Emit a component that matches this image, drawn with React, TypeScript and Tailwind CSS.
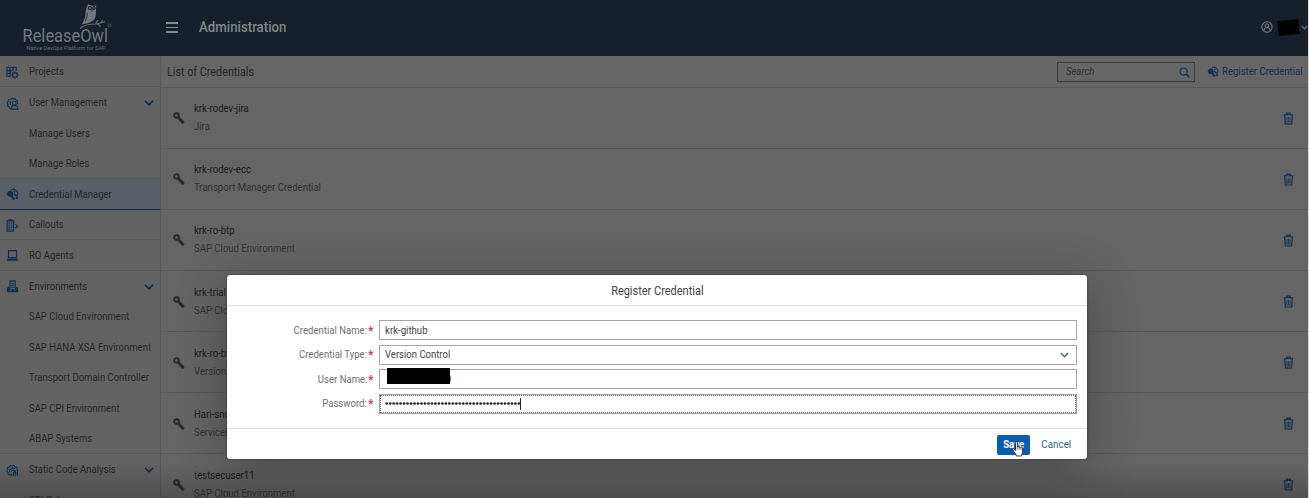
import React from "react";

type IconProps = { className?: string };

function ProjectsIcon() {
  return (
    <svg viewBox="0 0 14 14" className="h-[13px] w-[13px]" fill="none" stroke="currentColor" strokeWidth="1">
      <path d="M1 1.5h10v4M1 1.5v9.5h4.5M1 5h7M1 8h4.5M4.3 1.5V11M7.7 1.5V5" strokeWidth="1.2" />
      <circle cx="9.6" cy="9.6" r="2.5" strokeWidth="1.3" />
      <path d="M9.6 5.6v1.5M9.6 12.1v1.7M5.6 9.6h1.5M12.1 9.6h1.7M6.8 6.8l1 1M11.4 11.4l1 1M12.4 6.8l-1 1M7.8 11.4l-1 1" />
    </svg>
  );
}

function UserManagementIcon() {
  return (
    <svg viewBox="0 0 14 14" className="h-[13px] w-[13px]" fill="none" stroke="currentColor" strokeWidth="1.2">
      <path d="M5 12.7 3.6 12 3.3 10.4 1.6 9.3 2 7.5 1.2 5.8 2.6 4.4 3 2.7l1.9-.3L6.3 1.2l1.6.8 1.8-.3 1 1.5 1.5.9v1.8l.8 1.3" />
      <path d="M5.2 8.5A3 3 0 0 1 5.5 4.4" />
      <circle cx="9" cy="6.7" r="2.1" />
      <path d="M5.5 13c0-2.6 1.5-3.9 3.5-3.9s3.8 1.3 3.8 3.9z" />
    </svg>
  );
}

function CredentialIcon({ className = "h-[13px] w-[13px]" }: IconProps) {
  return (
    <svg viewBox="0 0 14 14" className={className} fill="none" stroke="currentColor">
      <path d="M4.8 2.6 7.4 4.6 7.8 6.8 6.6 8 5.2 9.4 2.8 9.2.7 6.6 2 3.8z" fill="currentColor" stroke="none" />
      <path d="M4.6 8.4 7.6 12.6 9.4 12.8 9.6 11.2 6.8 6.8z" fill="currentColor" stroke="none" />
      <path d="M5.8 2.4 8.2 1l3.4 2 1.2 3.2-1.6 2.2" strokeWidth="1.2" />
      <path d="M8.4 6 12.2 9.6 12 11.2 10.6 11" strokeWidth="1.5" />
      <circle cx="9" cy="3.8" r="1" fill="currentColor" stroke="none" />
    </svg>
  );
}

function CalloutsIcon() {
  return (
    <svg viewBox="0 0 14 14" className="h-[13px] w-[13px]" fill="none" stroke="currentColor">
      <path d="M1.2 2h7v11h-7zM3 2V.8h3.4V2" strokeWidth="1.3" />
      <path d="M2.6 4.5h4.3M2.6 6.7h4.3M2.6 8.9h4.3M2.6 11h4.3" strokeWidth="1.4" strokeDasharray="1.7 .9" />
      <path d="M10.2 5.5 12.5 7.7 10.2 10" strokeWidth="1.3" />
    </svg>
  );
}

function LaptopIcon() {
  return (
    <svg viewBox="0 0 14 14" className="h-[13px] w-[13px]" fill="none" stroke="currentColor">
      <path d="M2.7 1.8h8.6v7.4H2.7z" strokeWidth="1.3" />
      <path d="M2 10.2h10l1.3 2.5H.7z" fill="currentColor" stroke="none" />
    </svg>
  );
}

function EnvironmentsIcon() {
  return (
    <svg viewBox="0 0 14 14" className="h-[13px] w-[13px]" fill="none" stroke="currentColor">
      <path d="M4.3 12V1h5.6v11" strokeWidth="1.3" />
      <path d="M5.7 3.5h3M5.7 5.7h3M5.7 7.9h3" strokeWidth="1.1" />
      <path d="M3.6 7 1 8.3v4.9h12V8.3l-2.4-.8v4H8.4V9.8H6v1.7H3.6z" fill="currentColor" stroke="none" />
    </svg>
  );
}

function AnalysisIcon() {
  return (
    <svg viewBox="0 0 14 14" className="h-[13px] w-[13px]" fill="none" stroke="currentColor" strokeWidth="1.1">
      <path d="M5 12.8 4.2 11.2 2.2 11 2.3 9 .9 7.5 2 5.9 1.7 3.9 3.7 3.3 4.7 1.5l1.9.6 1.9-.7 1.1 1.6 2 .5v2l1.3 1.5-.8 1" />
      <path d="M3.9 9.2A3.8 3.8 0 0 1 9.8 5M5.7 8.4a1.8 1.8 0 0 1 3.2-1.2c.7 1-.2 1.7-1 2.2v3.8" />
      <path d="M10 6.5v6.3M12.3 8v5M5.8 10.3v2.5M10 10h2.3" />
    </svg>
  );
}

function KeyIcon() {
  return (
    <svg viewBox="0 0 12 12" className="h-3 w-3 shrink-0" fill="none" stroke="currentColor">
      <circle cx="3.5" cy="3.5" r="2.3" strokeWidth="2.1" />
      <path d="M5 5.2 10.8 10.9" strokeWidth="2.8" />
      <path d="M6.8 9.2 8.4 7.6M8.8 11.2l1.6-1.6" strokeWidth="1.6" />
    </svg>
  );
}

function TrashIcon() {
  return (
    <svg viewBox="0 0 12 14" className="h-[13px] w-[11px] shrink-0" fill="none" stroke="currentColor">
      <path d="M.8 2.9h10.4M4 2.7V1.2h4v1.5" strokeWidth="1.3" />
      <path d="M1.9 3.2 2.5 13h7l.6-9.8" strokeWidth="1.3" />
      <path d="M4.3 5.5v5M6 5.5v5M7.7 5.5v5M4 10.7h4" strokeWidth=".9" />
    </svg>
  );
}

function Chevron({ className }: IconProps) {
  return (
    <svg viewBox="0 0 10 6" className={className} fill="none" stroke="currentColor">
      <path d="M1 .8 5 4.9 9 .8" strokeWidth="1.6" />
    </svg>
  );
}

function Logo() {
  return (
    <svg viewBox="0 0 96 52" className="h-[52px] w-24" fill="none" stroke="#6c7175">
      <path d="M70 4c-1.6 4-2.4 6-2.6 10-.2 4-1.8 7-3.4 10.5 5-1 10-2 12.600-5.500 2-3 1.200-9 1.600-13.500-1.400.5-2 .2-3.600.2-1.500 0-3-.6-4.600-1.700z" fill="#74797d" stroke="none" />
      <circle cx="71.9" cy="8" r="1.500" stroke="#17202a" strokeWidth="1.100" />
      <circle cx="75.900" cy="8" r="1.300" stroke="#17202a" strokeWidth="1.100" />
      <path d="M74 9.300v2M69.300 13c.3 3-1 5-2 8" stroke="#17202a" strokeWidth=".8" />
      <path d="M62 28.500c4-4 10-4.500 16-4.500 3-.2 5-1.700 9-2.300M77.500 23.500l2.500-3.300M79 23.800c2 1 3 1.500 3.600 3.400M83 22.800l1.500-2.800" strokeWidth="1.100" />
      <text x="4.500" y="42" textLength="85.500" lengthAdjust="spacingAndGlyphs" fontFamily="Roboto, sans-serif" fontSize="17.500" fill="#74797d" stroke="none">
        ReleaseOwl
      </text>
      <text x="8.500" y="50" textLength="79" lengthAdjust="spacingAndGlyphs" fontFamily="Roboto, sans-serif" fontSize="6" fill="#686d71" stroke="none">
        Native DevOps Platform for SAP
      </text>
      <circle cx="91.500" cy="25.500" r="1.500" strokeWidth=".6" />
    </svg>
  );
}

type Item = { label: string; icon?: React.ReactNode; open?: boolean; selected?: boolean; line?: boolean };

const items: Item[] = [
  { label: "Projects", icon: <ProjectsIcon />, line: true },
  { label: "User Management", icon: <UserManagementIcon />, open: true },
  { label: "Manage Users" },
  { label: "Manage Roles", line: true },
  { label: "Credential Manager", icon: <CredentialIcon />, selected: true },
  { label: "Callouts", icon: <CalloutsIcon />, line: true },
  { label: "RO Agents", icon: <LaptopIcon />, line: true },
  { label: "Environments", icon: <EnvironmentsIcon />, open: true },
  { label: "SAP Cloud Environment" },
  { label: "SAP HANA XSA Environment" },
  { label: "Transport Domain Controller" },
  { label: "SAP CPI Environment" },
  { label: "ABAP Systems", line: true },
  { label: "Static Code Analysis", icon: <AnalysisIcon />, open: true },
  { label: "CPI Rules" },
];

const credentials = [
  ["krk-rodev-jira", "Jira"],
  ["krk-rodev-ecc", "Transport Manager Credential"],
  ["krk-ro-btp", "SAP Cloud Environment"],
  ["krk-trial", "SAP Cloud Environment"],
  ["krk-ro-bitbucket", "Version Control"],
  ["Hari-snow", "ServiceNow"],
  ["testsecuser11", "SAP Cloud Environment"],
];

function SidebarItem({ item }: { item: Item }) {
  const edge = item.selected
    ? "border-b border-[#142846] bg-[#596068]"
    : item.line
      ? "border-b border-[#5a5a5a]"
      : "";
  return (
    <li className={"flex h-[30.55px] shrink-0 items-center pt-[1.5px] " + edge}>
      <span className="flex w-[29px] shrink-0 pl-[6px] text-[#12304f]">{item.icon}</span>
      <span className="origin-left scale-x-[0.89] whitespace-nowrap">{item.label}</span>
      {item.open && <Chevron className="mr-1.5 ml-auto h-[6px] w-[10px] shrink-0 text-[#0e2b4a]" />}
    </li>
  );
}

function Field({ label, focused, children }: { label: string; focused?: boolean; children: React.ReactNode }) {
  return (
    <div className="flex h-[24.6px] items-start">
      <div className="flex h-5 w-[147px] shrink-0 items-center justify-end pt-px pr-[0.5px] text-[#6f6f6f]">
        <span className="origin-right scale-x-[0.895] whitespace-nowrap">{label}:</span>
        <span className="ml-px text-[12px] font-bold text-[#b8404c]">*</span>
      </div>
      <div
        className={
          "relative ml-[4.5px] flex h-5 w-[698px] items-center border border-[#a2a4a6] pt-px pl-[5px] text-[#444] " +
          (focused ? "outline-1 -outline-offset-2 outline-dotted outline-[#666]" : "")
        }
      >
        {children}
      </div>
    </div>
  );
}

export default function App() {
  return (
    <div className="relative flex h-[498px] w-[1309px] flex-col overflow-hidden border-r border-[#d8d8d8] bg-[#656565] font-['Roboto',sans-serif] text-[10.7px] leading-[14px] text-[#272727]">
      <header className="flex h-14 shrink-0 items-center bg-[#17202a] pb-[2px] text-[#82878a]">
        <div className="ml-[18px] self-start">
          <Logo />
        </div>
        <div className="ml-[52px] flex w-3 flex-col gap-[3px] pt-px">
          <span className="h-[1.5px] bg-[#858a8d]" />
          <span className="h-[1.5px] bg-[#858a8d]" />
          <span className="h-[1.5px] bg-[#858a8d]" />
        </div>
        <h1 className="ml-[21px] origin-left scale-x-[0.855] text-[15.5px] leading-5 font-medium">Administration</h1>
        <div className="ml-auto flex items-center">
          <svg viewBox="0 0 14 14" className="h-3 w-3" fill="none" stroke="#747a7f">
            <circle cx="7" cy="7" r="6" strokeWidth="1.2" />
            <circle cx="7" cy="5.2" r="2.1" strokeWidth="1.2" />
            <path d="M3.5 11.5c0-2.600 1.400-3.800 3.500-3.800s3.500 1.200 3.500 3.800" strokeWidth="1.2" />
          </svg>
          <span className="ml-[5px] h-[15px] w-[21px] -rotate-6 bg-black" />
          <Chevron className="mr-[0.5px] ml-[2px] h-[5px] w-[7px] text-[#747a7f]" />
        </div>
      </header>

      <div className="flex min-h-0 flex-1">
        <nav className="w-[161px] shrink-0 overflow-hidden border-r border-[#595959] bg-[#636363] pt-[0.9px]">
          <ul className="flex flex-col">
            {items.map((item) => (
              <SidebarItem key={item.label} item={item} />
            ))}
          </ul>
        </nav>

        <main className="flex min-w-0 flex-1 flex-col overflow-hidden">
          <div className="flex h-[31.5px] shrink-0 items-center border-b border-[#575757] bg-[#666] pt-[2px]">
            <h2 className="ml-[6px] origin-left scale-x-[0.885] text-[12.2px] whitespace-nowrap">List of Credentials</h2>
            <div className="ml-auto flex h-5 w-[138px] items-center justify-between border border-[#3c3c3c] pr-[4px] pl-[8px]">
              <span className="origin-left scale-x-[0.89] text-[#303030] italic">Search</span>
              <svg viewBox="0 0 12 12" className="h-[11px] w-[11px]" fill="none" stroke="#12304f">
                <circle cx="5" cy="5" r="3.9" strokeWidth="1.2" />
                <path d="M8 8l3.300 3.300" strokeWidth="1.6" />
              </svg>
            </div>
            <div className="ml-[12px] flex w-[101px] items-center gap-[3px] text-[#12304f]">
              <CredentialIcon className="h-3 w-3 shrink-0" />
              <span className="origin-left scale-x-[0.895] whitespace-nowrap">Register Credential</span>
            </div>
          </div>
          <ul className="flex flex-col">
            {credentials.map(([name, type]) => (
              <li key={name} className="flex h-[61.1px] shrink-0 items-center border-b border-[#595959] pt-[1.5px] pr-[14px] pl-[12px]">
                <span className="text-[#2b2b2b]">
                  <KeyIcon />
                </span>
                <div className="ml-[9px] flex origin-left scale-x-[0.895] flex-col gap-1 whitespace-nowrap">
                  <span className="text-[#1c1c1c]">{name}</span>
                  <span className="text-[#333]">{type}</span>
                </div>
                <span className="ml-auto text-[#12304f]">
                  <TrashIcon />
                </span>
              </li>
            ))}
          </ul>
        </main>
      </div>

      <div className="absolute inset-x-0 bottom-0 h-9 bg-linear-to-t from-black/20 to-transparent" />

      <section
        role="dialog"
        className="absolute top-[275px] left-[227px] flex h-[184px] w-[860px] flex-col rounded-[3px] bg-white shadow-[0_0_2px_rgba(0,0,0,0.6),0_8px_50px_rgba(0,0,0,0.3)]"
      >
        <div className="flex h-[31px] shrink-0 items-center justify-center border-b border-[#dedede] pt-px text-[12.2px] text-[#444]">
          <span className="scale-x-[0.9]">Register Credential</span>
        </div>
        <div className="flex h-[122px] shrink-0 flex-col pt-[14px]">
          <Field label="Credential Name">
            <span className="origin-left scale-x-[0.9]">krk-github</span>
          </Field>
          <Field label="Credential Type">
            <span className="origin-left scale-x-[0.89]">Version Control</span>
            <Chevron className="mr-[7px] ml-auto h-[6px] w-[9px] text-[#4b6176]" />
          </Field>
          <Field label="User Name">
            <span className="ml-[61px]">9</span>
            <span className="absolute top-[-2px] left-[7px] h-4 w-[63px] bg-black" />
          </Field>
          <Field label="Password" focused>
            <svg viewBox="0 0 137 12" className="h-3 w-[137px]">
              {Array.from({ length: 39 }, (_, i) => (
                <circle key={i} cx={1.7 + i * 3.48} cy="5.5" r="1.35" fill="#222" />
              ))}
              <path d="M135.500 0v12" stroke="#222" strokeWidth="1" />
            </svg>
          </Field>
        </div>
        <div className="flex flex-1 items-center justify-end border-t border-[#dedede] pt-px pr-[14px]">
          <button className="h-5 w-[33px] rounded-[2px] bg-[#0b5cad] font-bold text-white">
            <span className="inline-block scale-x-[0.9]">Save</span>
          </button>
          <button className="ml-[9px] w-[34px] text-[#346187]">
            <span className="inline-block scale-x-[0.92]">Cancel</span>
          </button>
        </div>
      </section>

      <svg viewBox="0 0 12 16" className="absolute top-[441px] left-[1012px] h-4 w-3">
        <path
          d="M3.5 1.5c0-1.200 1.800-1.200 1.800 0v4.700c.2-1 1.700-.8 1.800.2.300-.9 1.600-.7 1.800.3.400-.7 1.700-.4 1.700.6v3.200c0 2-1 2.500-1 4.500H4.400c0-1.500-1.300-2.400-2-3.600L.8 8.800c-.6-1 .8-1.700 1.500-.8l1.200 1.300z"
          fill="#fff"
          stroke="#222"
          strokeWidth=".9"
        />
        <path d="M5.300 6.200v2.500M7.100 6.500v2.200M8.900 7v1.900" stroke="#222" strokeWidth=".6" />
      </svg>
    </div>
  );
}
